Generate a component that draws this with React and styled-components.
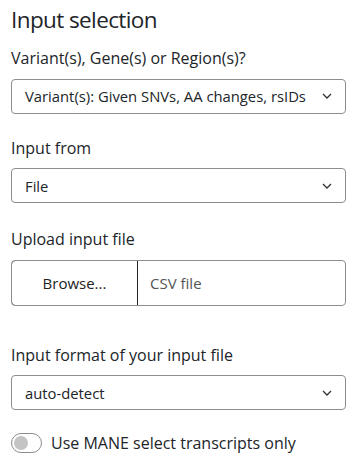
import styled, { createGlobalStyle } from "styled-components";

const GlobalStyle = createGlobalStyle`
  body {
    margin: 0;
    background: #fff;
    font-family: "Open Sans", "Noto Sans", sans-serif;
    color: #212529;
  }
  * { box-sizing: border-box; }
`;

const Page = styled.div`
  padding: 6px 13px 0 11px;
`;

const Title = styled.h2`
  margin: 0 0 11.7px;
  font-size: 22.5px;
  font-weight: 400;
  letter-spacing: -0.6px;
  line-height: 28.8px;
`;

const Group = styled.div`
  margin-bottom: ${({ $gap }) => $gap}px;
`;

const Label = styled.label`
  display: block;
  font-size: 16px;
  line-height: 24px;
  margin-bottom: 8.5px;
`;

const SelectBox = styled.div`
  display: flex;
  align-items: center;
  height: 35px;
  padding: 0 13px;
  border: 1px solid #8a8d91;
  border-radius: 4px;
  font-size: 14.8px;
  background: #fff;
`;

const Chevron = styled.svg`
  margin-left: auto;
  width: 10px;
  height: 6px;
`;

const FileRow = styled.div`
  display: flex;
  height: 46px;
  border: 1px solid #8a8d91;
  border-radius: 4px;
  overflow: hidden;
  font-size: 15px;
`;

const BrowseButton = styled.div`
  width: 127px;
  display: flex;
  align-items: center;
  justify-content: center;
  border: 1px solid #222;
  margin: -1px 0 -1px -1px;
  border-radius: 4px 0 0 4px;
  color: #222;
`;

const FileName = styled.div`
  display: flex;
  align-items: center;
  padding-left: 12px;
  color: #555;
`;

const SwitchRow = styled.div`
  display: flex;
  align-items: center;
  gap: 9px;
  font-size: 16px;
  line-height: 24px;
`;

const Switch = styled.span`
  display: inline-flex;
  align-items: center;
  width: 31px;
  height: 20px;
  border: 1px solid #8a8d91;
  border-radius: 10px;
  padding-left: 2px;
  &::before {
    content: "";
    width: 14px;
    height: 14px;
    border-radius: 50%;
    background: #c4c4c4;
  }
`;

function Select({ value }) {
  return (
    <SelectBox>
      {value}
      <Chevron viewBox="0 0 10 6">
        <path d="M1 1l4 4 4-4" fill="none" stroke="#333" strokeWidth="1.3" />
      </Chevron>
    </SelectBox>
  );
}

export default function App() {
  return (
    <>
      <GlobalStyle />
      <Page>
        <Title>Input selection</Title>
        <Group $gap={22}>
          <Label>Variant(s), Gene(s) or Region(s)?</Label>
          <Select value="Variant(s): Given SNVs, AA changes, rsIDs" />
        </Group>
        <Group $gap={24}>
          <Label>Input from</Label>
          <Select value="File" />
        </Group>
        <Group $gap={37}>
          <Label>Upload input file</Label>
          <FileRow>
            <BrowseButton>Browse...</BrowseButton>
            <FileName>CSV file</FileName>
          </FileRow>
        </Group>
        <Group $gap={21}>
          <Label>Input format of your input file</Label>
          <Select value="auto-detect" />
        </Group>
        <SwitchRow>
          <Switch />
          Use MANE select transcripts only
        </SwitchRow>
      </Page>
    </>
  );
}
